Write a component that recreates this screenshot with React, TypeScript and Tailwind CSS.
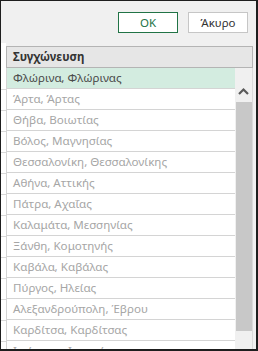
import React from 'react';

const rows = [
    'Φλώρινα, Φλώρινας',
    'Άρτα, Άρτας',
    'Θήβα, Βοιωτίας',
    'Βόλος, Μαγνησίας',
    'Θεσσαλονίκη, Θεσσαλονίκης',
    'Αθήνα, Αττικής',
    'Πάτρα, Αχαΐας',
    'Καλαμάτα, Μεσσηνίας',
    'Ξάνθη, Κομοτηνής',
    'Καβάλα, Καβάλας',
    'Πύργος, Ηλείας',
    'Αλεξανδρούπολη, Έβρου',
    'Καρδίτσα, Καρδίτσας',
    'Ιωάννινα, Ιωαννίνων',
];

const App: React.FC = () => {
    return (
        <div
            className="w-[258px] h-[351px] overflow-hidden bg-[#f0f0f0] border-l border-t border-r-2 border-b-2 border-[#1e1e1e] flex flex-col"
            style={{ fontFamily: '"Noto Sans", "Open Sans", sans-serif' }}
        >
            {/* buttons */}
            <div className="flex justify-end gap-[10px] pt-[11px] pr-[8px] h-[42px] shrink-0">
                <button className="w-[60px] h-[21px] bg-white border border-[#217346] text-[11.5px] text-[#217346] leading-none">
                    OK
                </button>
                <button className="w-[60px] h-[21px] bg-white border border-[#c6c6c6] text-[11.5px] text-[#333] leading-none">
                    Άκυρο
                </button>
            </div>

            <div className="flex flex-1 min-h-0">
                {/* sheet peeking out on the left */}
                <div className="w-[5px] shrink-0 bg-white flex flex-col pt-[26px]">
                    {rows.map((r, i) => (
                        <div key={i} className="h-[21px] shrink-0 border-b border-[#d8d8d8]" />
                    ))}
                </div>

                <div className="w-[247px] shrink-0 flex flex-col pt-[3px]">
                    <div className="h-[22px] shrink-0 bg-[#e6e6e6] border border-[#b4b4b4] flex items-center pl-[6px] text-[11.5px] font-bold text-[#333]">
                        Συγχώνευση
                    </div>
                    <div className="flex flex-1 min-h-0">
                        <div className="w-[229px] shrink-0 flex flex-col bg-white">
                            {rows.map((r, i) => (
                                <div
                                    key={r}
                                    className={`h-[21px] shrink-0 border-l border-b border-[#d4d4d4] flex items-center pl-[6px] text-[11.6px] whitespace-nowrap ${i === 0 ? 'bg-[#d3ece0] text-[#4a4a4a]' : 'text-[#a6a6a6]'}`}
                                >
                                    {r}
                                </div>
                            ))}
                        </div>
                        <div className="flex-1 flex flex-col bg-[#f0f0f0] border-r border-[#dadada]">
                            <div className="h-[34px] shrink-0 flex justify-center pt-[19px]">
                                <svg width="11" height="8" viewBox="0 0 11 8">
                                    <path d="M1 7 L5.5 2.5 L10 7" stroke="#5a5a5a" strokeWidth="2.2" fill="none" />
                                </svg>
                            </div>
                            <div className="h-[229px] shrink-0 bg-[#c8c8c8] ml-px" />
                        </div>
                    </div>
                </div>
            </div>
        </div>
    );
};

export default App;
